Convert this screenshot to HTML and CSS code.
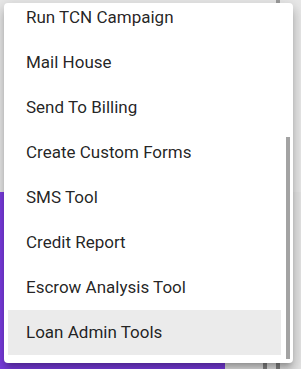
FILE: index.html
```html
<!DOCTYPE html>
<html lang="en">
<head>
    <meta charset="UTF-8">
    <meta name="viewport" content="width=device-width, initial-scale=1.0">
    <title>Actions Menu</title>
    <link rel="stylesheet" href="styles.css">
</head>
<body>
    <div class="page">
        <div class="page-top">
            <div class="line light"></div>
        </div>
        <div class="page-bottom">
            <div class="banner"></div>
            <div class="side">
                <div class="line"></div>
                <div class="line"></div>
            </div>
        </div>

        <div class="menu">
            <ul class="menu-list">
                <li class="menu-item">Run TCN Campaign</li>
                <li class="menu-item">Mail House</li>
                <li class="menu-item">Send To Billing</li>
                <li class="menu-item">Create Custom Forms</li>
                <li class="menu-item">SMS Tool</li>
                <li class="menu-item">Credit Report</li>
                <li class="menu-item">Escrow Analysis Tool</li>
                <li class="menu-item active">Loan Admin Tools</li>
            </ul>
            <div class="scroll-track">
                <div class="scroll-thumb"></div>
            </div>
        </div>
    </div>
</body>
</html>
```

FILE: styles.css
```css
body {
    margin: 0;
    font-family: Roboto, 'Liberation Sans', sans-serif;
    overflow: hidden;
}

.page {
    position: relative;
    display: grid;
    grid-template-rows: 192px 1fr;
    height: 369px;
    width: 301px;
}

.page-top {
    background: #e8e8e8;
    display: flex;
    padding-left: 276px;
}

.page-bottom {
    display: flex;
}

.banner {
    width: 225px;
    background: #7b3ce2;
}

.side {
    flex: 1;
    display: flex;
    gap: 9px;
    padding-left: 38px;
    background: #e4e4e4;
}

.line {
    width: 4px;
    background: #858585;
}

.line.light {
    background: #9c9c9c;
}

/* dropdown over the page */
.menu {
    position: absolute;
    top: 3px;
    left: 4px;
    width: 289px;
    height: 360px;
    background: #fff;
    border-radius: 4px;
    overflow: hidden;
    display: flex;
    box-shadow: 0 5px 5px -3px rgba(0, 0, 0, 0.2),
                0 8px 10px 1px rgba(0, 0, 0, 0.14),
                0 3px 14px 2px rgba(0, 0, 0, 0.12);
}

.menu-list {
    list-style: none;
    margin: -8px 0 0 0;
    padding: 0 0 0 4px;
    width: 273px;
}

.menu-item {
    box-sizing: border-box;
    height: 45px;
    display: flex;
    align-items: center;
    padding: 0 0 2px 18px;
    font-size: 17px;
    color: rgba(0, 0, 0, 0.87);
}

.menu-item.active {
    background: #ebebeb;
}

.scroll-track {
    padding: 134px 0 0 5px;
}

.scroll-thumb {
    width: 4px;
    height: 222px;
    background: #a3a3a3;
}
```
